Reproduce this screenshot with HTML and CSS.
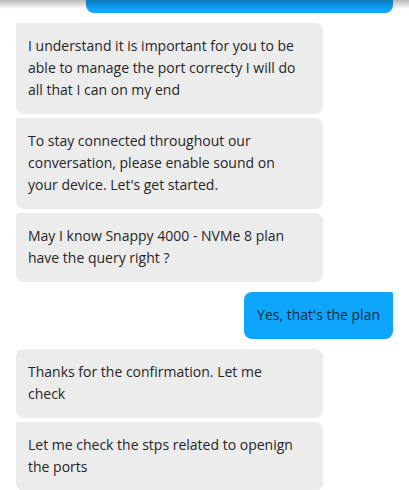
FILE: index.html
```html
<!DOCTYPE html>
<html>
<head>
<meta charset="utf-8">
<link rel="stylesheet" href="styles.css">
</head>
<body>
<div class="viewport">
  <div class="shadow"></div>
  <div class="thread">
    <div class="group user">
      <div class="bubble out tail"></div>
    </div>
    <div class="group bot">
      <div class="bubble in cont">I understand it is important for you to be<br>able to manage the port correcty I will do<br>all that I can on my end</div>
      <div class="bubble in cont">To stay connected throughout our<br>conversation, please enable sound on<br>your device. Let's get started.</div>
      <div class="bubble in cont">May I know Snappy 4000 - NVMe 8 plan<br>have the query right ?</div>
    </div>
    <div class="group user">
      <div class="bubble out">Yes, that's the plan</div>
    </div>
    <div class="group bot">
      <div class="bubble in">Thanks for the confirmation. Let me<br>check</div>
      <div class="bubble in cont">Let me check the stps related to openign<br>the ports</div>
    </div>
  </div>
</div>
</body>
</html>
```
FILE: styles.css
```css
html, body {
  margin: 0;
  padding: 0;
  background: #ffffff;
}
.viewport {
  position: relative;
  height: 490px;
  overflow: hidden;
  font-family: "Open Sans", "Noto Sans", sans-serif;
  font-size: 14px;
  line-height: 22px;
  color: #262626;
}
.shadow {
  position: absolute;
  left: 0;
  right: 0;
  top: 0;
  height: 9px;
  background: linear-gradient(rgba(0,0,0,0.28), rgba(0,0,0,0));
  z-index: 2;
}
.thread {
  display: flex;
  flex-direction: column;
  gap: 10px;
  padding: 0 16px;
  margin-top: -33px;
}
.group {
  display: flex;
  flex-direction: column;
  gap: 4px;
}
.group.user {
  align-items: flex-end;
}
.group.bot {
  align-items: flex-start;
}
.bubble {
  padding: 12px 12px 13px 12px;
  white-space: nowrap;
  box-sizing: border-box;
}
.in {
  width: 307px;
  background: #ececec;
  border-radius: 8px;
}
.in.cont {
  border-top-left-radius: 2px;
}
.out {
  background: #0ea5fd;
  color: #14283a;
  border-radius: 8px 2px 8px 8px;
  padding-left: 13px;
  padding-right: 13px;
}
.out.tail {
  width: 307px;
  height: 46px;
}
```
